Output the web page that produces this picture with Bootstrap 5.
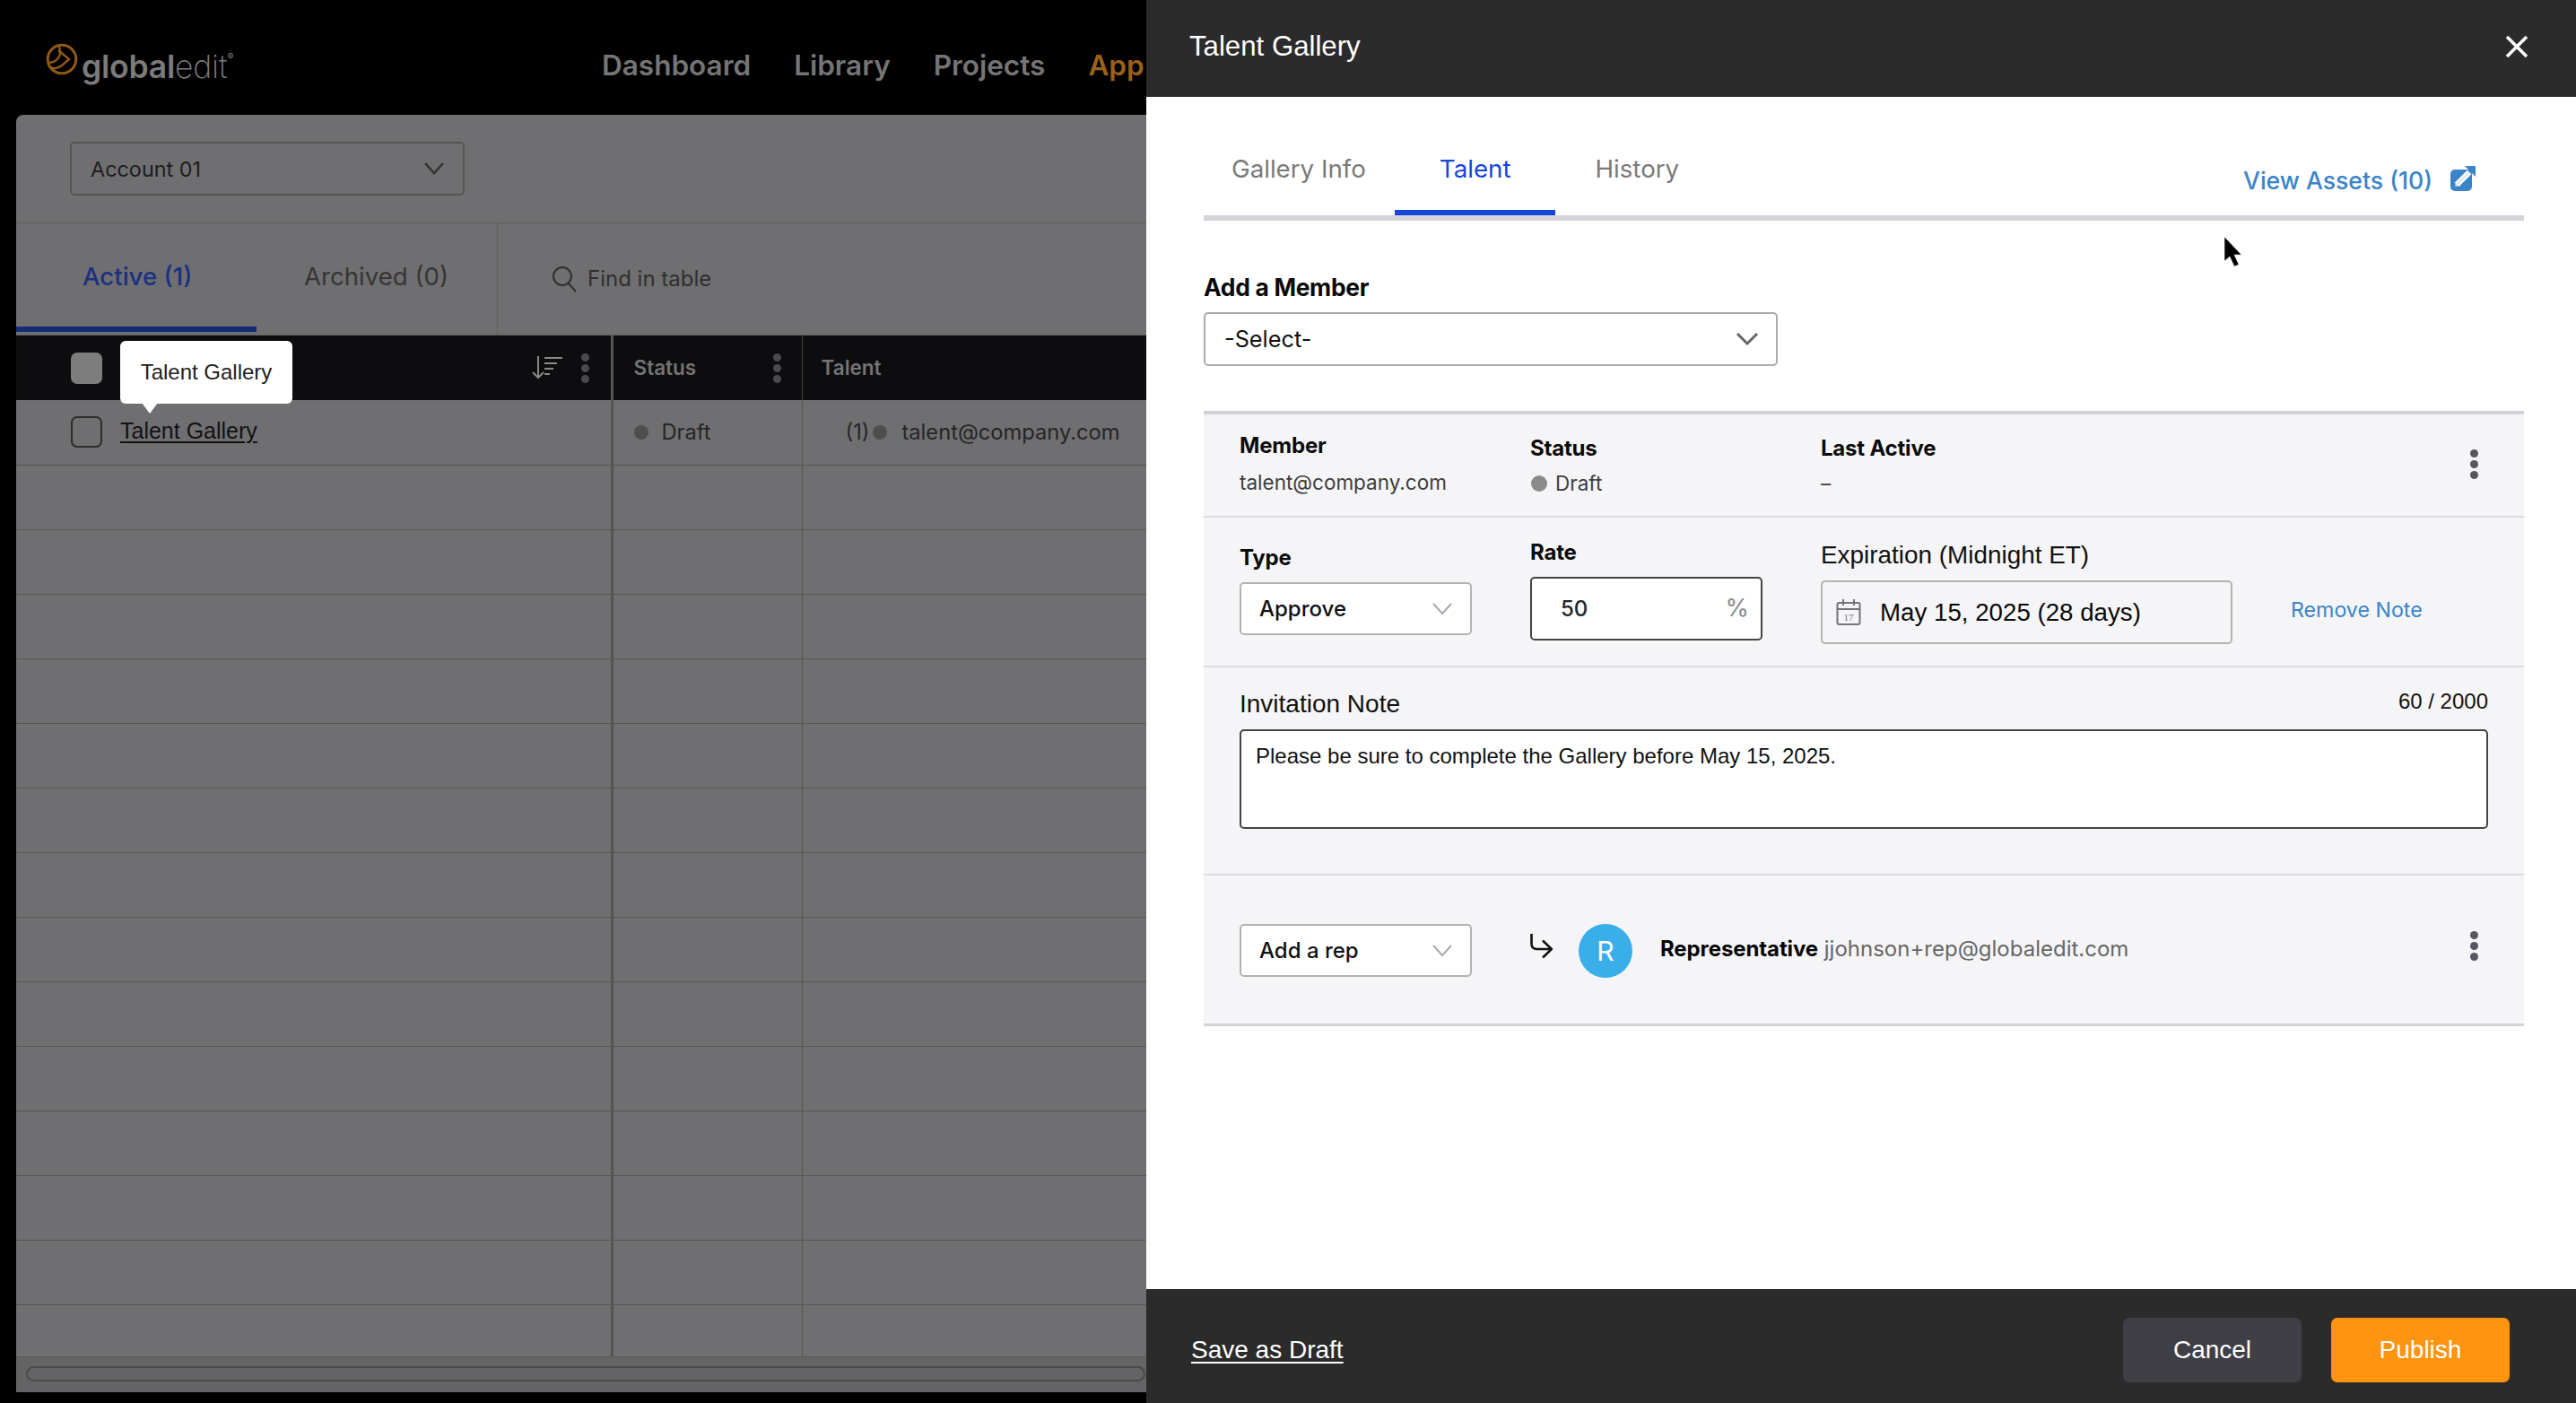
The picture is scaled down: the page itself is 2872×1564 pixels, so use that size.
<!DOCTYPE html>
<html lang="en">
<head>
<meta charset="utf-8">
<title>Talent Gallery</title>
<link rel="stylesheet" href="https://cdn.jsdelivr.net/npm/bootstrap@5.3.0/dist/css/bootstrap.min.css">
<style>
html,body{height:100%;margin:0;background:#000;overflow:hidden}
body{font-family:"Inter","Liberation Sans",sans-serif;color:#111}
.ari{font-family:"Liberation Sans",Arial,sans-serif}
.shell{width:2872px;height:1564px}
.leftpane{width:1278px;height:1564px;overflow:hidden;background:#000;flex:none;position:relative}
.topbar{height:128px;padding-left:51px}
.logoicon{flex:none;margin-top:4px}
.logoword{font-size:35.500px;line-height:1;color:#7b7b7b;margin-left:4px;margin-top:22px;letter-spacing:-.2px;font-family:"Inter",sans-serif;flex:none}
.logoword b{font-weight:600}
.logoword span{font-weight:200;color:#7d7d7d}
.logoword sup{font-size:11px;top:-1.8em;font-weight:400}
.mainlinks{margin-left:auto;gap:48px;margin-top:18px;white-space:nowrap;flex-wrap:nowrap;flex:none;width:607px}
.mainlinks a{font-size:31.5px;font-weight:600;color:#757575;text-decoration:none;padding:0;flex:none}
.mainlinks a.apx{color:#9c6119}
.graybox{margin-left:18px;width:1260px;height:1424px;background:#6f6f71;border-top-left-radius:8px;overflow:hidden}
.acctrow{height:121px;padding:30px 0 0 60px;border-bottom:1px solid #5b5b5b}
.acctsel{width:440px;height:60px;background-color:transparent;border:2px solid #555;border-radius:5px;font-size:23.4px;color:#1d1d1d;padding:2px 0 0 21px;box-shadow:none;background-position:right 17px center;background-size:30px 18px;font-family:"Inter",sans-serif;background-image:url("data:image/svg+xml,%3Csvg xmlns='http://www.w3.org/2000/svg' viewBox='0 0 30 18'%3E%3Cpath d='M5 3l10 11L25 3' fill='none' stroke='%23333' stroke-width='2.6'/%3E%3C/svg%3E")}
.tabrow{height:124px;position:relative}
.tabact,.tabarc{font-size:27.6px;text-decoration:none}
.tabact{width:268px;height:121px;line-height:118px;padding-left:74px;color:#1a3180;border-bottom:6px solid #142c75;font-weight:500}
.tabarc{width:269px;height:124px;line-height:118px;padding-left:53px;color:#353535;border-right:1px solid #606060}
.finder{padding-left:60px;gap:12px;font-size:24px;color:#2f2f2f;padding-top:0}
.gtwrap{height:1139px;overflow:hidden;border-top:1px solid #5f5f5f;position:relative}
.gtab{table-layout:fixed;width:1260px;border-collapse:collapse;--bs-table-bg:transparent;margin:0}
.gtab th,.gtab td{padding:0;vertical-align:middle;border-right:1px solid #555;height:72px}
.gtab td{border-bottom:1px solid #565656;color:#252525;font-size:23.7px;font-weight:400}
.gtab th{background:#0d0d0f;font-size:22.5px;font-weight:600;color:#747474;border-bottom:0;border-right-color:#444}
.gtab .c1{width:664px;border-right:3px solid #555}
.gtab .c2{width:212px}
.gtab .c3{border-right:0}
.c1in{padding-left:61px}
.c2in{padding-left:23px}
.c3in{padding-left:21px}
.hsort{margin-left:auto;margin-right:20px;flex:none}
.kb1{margin-right:24px}
.kb2{margin-left:auto;margin-right:23px}
.hcheck{width:35px;height:35px;background:#7d7d7d;border-radius:7px;flex:none}
.rcheck{width:35px;height:35px;border:2px solid #2c2c2c;border-radius:7px;flex:none;margin-right:20px}
.ttname{color:#111;font-size:25px;text-decoration:underline;text-underline-offset:3px;margin-top:-2px}
.gdot{width:16px;height:16px;border-radius:50%;background:#4e4e4e;flex:none}
.draftgap{gap:15px}
.tipbox{position:absolute;left:116px;top:6px;width:192px;height:70px;background:#fff;border-radius:6px;font-size:24px;color:#222;display:flex;align-items:center;justify-content:center;z-index:3}
.tipbox::after{content:"";position:absolute;left:24px;top:69px;border-left:9px solid transparent;border-right:9px solid transparent;border-top:12px solid #fff}
.hscroll{height:40px;background:#646466;padding:10px 1px 0 11px;border-top:1px solid #5a5a5a}
.hthumb{height:17px;border:2px solid #4a4a48;border-radius:9px}
.sidepanel{width:1594px;height:1564px;background:#fff;flex:none;position:relative}
.sidehead{height:108px;background:#2b2b2b;padding:0 53px 4px 48px;color:#fff;font-size:31.2px}
.closebtn{background:none;border:0;padding:0;line-height:0}
.sidebody{flex:1 1 auto;padding:0 58px 0 64px}
.tabline{height:138px;border-bottom:6px solid #d3d3da}
.tabline a{text-decoration:none;font-size:27.7px;color:#7a7a7a;font-weight:400;height:132px;padding-top:64px;display:block;line-height:32px}
.tba{padding-left:31px;padding-right:32px}
.tbb{padding-left:50px;padding-right:50px;color:#1546d8!important;border-bottom:6px solid #1546d8;font-weight:500}
.tbc{padding-left:44px}
.viewlink{color:#3a84c9!important;font-weight:500!important;font-size:26.6px!important;padding-top:77px!important;gap:20px;margin-right:54px;display:flex!important;align-items:flex-start}
.addlbl{font-size:26.4px;font-weight:700;color:#0a0a0a;margin:58px 0 12px;line-height:32px;letter-spacing:-.3px}
.pickmem{width:640px;height:60px;border:2px solid #aaa;border-radius:5px;font-size:25.3px;padding:0 0 0 21px;color:#111;box-shadow:none;font-family:"Inter",sans-serif;background-position:right 17px center;background-size:30px 18px;background-image:url("data:image/svg+xml,%3Csvg xmlns='http://www.w3.org/2000/svg' viewBox='0 0 30 18'%3E%3Cpath d='M4 3l11 11L26 3' fill='none' stroke='%23666' stroke-width='3'/%3E%3C/svg%3E")}
.memcard{margin-top:50px;background:#f5f5f7;border-top:4px solid #d2d2d8;border-bottom:3px solid #d2d2d8}
.mrow{padding-left:40px;border-bottom:2px solid #dcdce2}
.mrow:last-child{border-bottom:0}
.mc1{width:324px;flex:none}
.mc3{width:460px;flex:none}
.r1{height:115px}
.r2{height:167px}
.r3{height:232px}
.r4{height:165px;padding-top:54px}
.blab{font-size:24px;font-weight:700;color:#0b0b0b;line-height:28px;letter-spacing:-.2px}
.val{font-size:22.5px;color:#3d3d3d;line-height:28px}
.mp1{padding-top:21px}
.mp1 .blab{margin-bottom:13px}
.mp2{padding-top:24px}
.mp2 .blab{margin-bottom:11px}
.sdot{width:18px;height:18px;border-radius:50%;background:#8a8a8a;flex:none;margin-right:9px;margin-left:1px}
.kebab{width:9px;gap:3px;flex:none}
.kebab i{display:block;width:9px;height:9px;border-radius:50%;background:#55565f}
.gtab .kebab i{background:#4a4a4c}
.kpos1{position:absolute;left:1412px;top:39px}
.kpos2{position:absolute;left:1412px;top:62px}
.mini{width:259px;height:59px;border:2px solid #b3b3b3;border-radius:5px;font-size:24px;font-weight:500;padding:0 0 0 20px;color:#111;box-shadow:none;font-family:"Inter",sans-serif;background-position:right 19px center;background-size:24px 16px;background-image:url("data:image/svg+xml,%3Csvg xmlns='http://www.w3.org/2000/svg' viewBox='0 0 24 16'%3E%3Cpath d='M2 2l10 11L22 2' fill='none' stroke='%23a8a8b0' stroke-width='2'/%3E%3C/svg%3E")}
.typecol{padding-top:31px}
.typecol .blab{margin-bottom:13px}
.ratecol{padding-top:25px}
.ratecol .blab{margin-bottom:13px}
.expcol{padding-top:27px}
.rate{width:259px;height:71px;border:2px solid #444;border-radius:5px;background:#fff;padding:0 13px 0 32px}
.rate input{border:0;outline:0;padding:0;width:120px;font-size:24px;font-weight:500;box-shadow:none;background:transparent;border-radius:0}
.rate span{font-size:27px;color:#8a8a8f}
.datebox{width:459px;height:71px;border:2px solid #b3b3b3;border-radius:5px;background:#f5f5f7;padding-left:15px;gap:21px;font-size:27.7px;color:#0a0a0a}
.explab{font-size:27.9px;line-height:30px;margin-bottom:13px;color:#111}
.remlink{font-size:23.2px;color:#3a84c9;text-decoration:none;margin-left:64px;margin-top:88px;line-height:30px;white-space:nowrap}
.notehead{padding-top:24px;margin-right:40px;margin-bottom:11px}
.notelab{font-size:28px;color:#111;line-height:34px}
.notecount{font-size:24px;color:#111;line-height:28px}
.notearea{width:1392px;height:111px;border:2px solid #444;border-radius:5px;font-size:24px;padding:10px 16px;color:#111;resize:none;box-shadow:none}
.arrowic{margin:11px 29px 0 65px;flex:none}
.avat{width:60px;height:60px;border-radius:50%;background:#3aaee8;color:#fff;font-size:30px;flex:none}
.rep{font-size:24px;color:#666;margin-left:31px;margin-top:10px;white-space:nowrap}
.rep b{color:#070707;font-weight:700;letter-spacing:-.1px}
.sidefoot{height:127px;background:#2b2b2b;padding:9px 74px 0 50px}
.draftlink{color:#fff;font-size:28px;text-decoration:underline;text-underline-offset:4px}
.foogap{gap:33px}
.foobtn{width:199px;height:72px;border:0;border-radius:7px;color:#fff;font-size:28px;padding:0}
.fgray{background:#3f3f45}
.forng{background:#ff9410}
.fgray:hover{background:#3f3f45;color:#fff}
.forng:hover{background:#ff9410;color:#fff}
.ptr{position:absolute;left:1202px;top:264px;z-index:5;line-height:0}
</style>
</head>
<body>
<div class="shell d-flex">
  <div class="leftpane">
    <div class="topbar d-flex align-items-center">
      <svg class="logoicon" width="36" height="36" viewBox="0 0 36 36" fill="none" stroke="#8f5a16" stroke-width="3"><circle cx="18" cy="18" r="15.8"/><path d="M2.500 22c5 0 9-2 12-6 2.500-3 2-7 0-14M14 8l12 10-8 7c-4 3-9 4-12 2" stroke-width="2.400"/></svg>
      <div class="logoword"><b>global</b><span>edit</span><sup>®</sup></div>
      <nav class="nav mainlinks"><a class="nav-link" href="#">Dashboard</a><a class="nav-link" href="#">Library</a><a class="nav-link" href="#">Projects</a><a class="nav-link apx" href="#">App</a></nav>
    </div>
    <div class="graybox">
      <div class="acctrow">
        <select class="form-select acctsel"><option>Account 01</option></select>
      </div>
      <div class="tabrow d-flex">
        <a href="#" class="tabact d-block">Active (1)</a>
        <a href="#" class="tabarc d-block">Archived (0)</a>
        <div class="finder d-flex align-items-center">
          <svg width="28" height="30" viewBox="0 0 28 30" fill="none" stroke="#2f2f2f" stroke-width="2"><circle cx="12" cy="12" r="10"/><path d="M19 20l8 9"/></svg>
          <span>Find in table</span>
        </div>
      </div>
      <div class="gtwrap">
        <div class="tipbox ari">Talent Gallery</div>
        <table class="table gtab">
          <thead>
            <tr>
              <th class="c1"><div class="d-flex align-items-center c1in">
                <div class="hcheck"></div>
                <svg class="hsort" width="36" height="28" viewBox="0 0 36 28" fill="none" stroke="#8a8a8a" stroke-width="2"><path d="M8 1v24M2 19l6 6 6-6"/><path d="M15 3h20M15 9h14M15 15h10M15 21h6"/></svg>
                <div class="kebab kb1 d-flex flex-column"><i></i><i></i><i></i></div>
              </div></th>
              <th class="c2"><div class="d-flex align-items-center c2in"><span>Status</span><div class="kebab kb2 d-flex flex-column"><i></i><i></i><i></i></div></div></th>
              <th class="c3"><div class="c3in">Talent</div></th>
            </tr>
          </thead>
          <tbody>
            <tr>
              <td class="c1"><div class="d-flex align-items-center c1in"><div class="rcheck"></div><a href="#" class="ttname ari">Talent Gallery</a></div></td>
              <td class="c2"><div class="d-flex align-items-center draftgap c2in"><span class="gdot"></span><span>Draft</span></div></td>
              <td class="c3"><div class="d-flex align-items-center"><span class="ms-5">(1)</span><span class="gdot ms-1"></span><span class="ms-3 text-nowrap">talent@company.com</span></div></td>
            </tr>
            <tr><td class="c1"></td><td class="c2"></td><td class="c3"></td></tr>
            <tr><td class="c1"></td><td class="c2"></td><td class="c3"></td></tr>
            <tr><td class="c1"></td><td class="c2"></td><td class="c3"></td></tr>
            <tr><td class="c1"></td><td class="c2"></td><td class="c3"></td></tr>
            <tr><td class="c1"></td><td class="c2"></td><td class="c3"></td></tr>
            <tr><td class="c1"></td><td class="c2"></td><td class="c3"></td></tr>
            <tr><td class="c1"></td><td class="c2"></td><td class="c3"></td></tr>
            <tr><td class="c1"></td><td class="c2"></td><td class="c3"></td></tr>
            <tr><td class="c1"></td><td class="c2"></td><td class="c3"></td></tr>
            <tr><td class="c1"></td><td class="c2"></td><td class="c3"></td></tr>
            <tr><td class="c1"></td><td class="c2"></td><td class="c3"></td></tr>
            <tr><td class="c1"></td><td class="c2"></td><td class="c3"></td></tr>
            <tr><td class="c1"></td><td class="c2"></td><td class="c3"></td></tr>
            <tr><td class="c1"></td><td class="c2"></td><td class="c3"></td></tr>
          </tbody>
        </table>
      </div>
      <div class="hscroll"><div class="hthumb"></div></div>
    </div>
  </div>

  <div class="sidepanel d-flex flex-column">
    <div class="sidehead d-flex align-items-center justify-content-between ari">
      <span>Talent Gallery</span>
      <button class="closebtn" type="button" aria-label="Close"><svg width="26" height="26" viewBox="0 0 26 26" fill="none" stroke="#fff" stroke-width="3.600"><path d="M2 2l22 22M24 2L2 24"/></svg></button>
    </div>
    <div class="sidebody">
      <nav class="tabline d-flex">
        <a href="#" class="tba">Gallery Info</a>
        <a href="#" class="tbb">Talent</a>
        <a href="#" class="tbc">History</a>
        <a href="#" class="viewlink ms-auto"><span>View Assets (10)</span>
          <svg width="28" height="28" viewBox="0 0 28 28" class="flex-none"><rect y="4" width="24" height="24" rx="5" fill="#3a84c9"/><path d="M7 21L21 7" stroke="#fff" stroke-width="6.500"/><path d="M6.500 21.500L19 9" stroke="#dfeaf5" stroke-width="2.600" stroke-linecap="round"/><path d="M16 0h12v12z" fill="#3a84c9"/></svg>
        </a>
      </nav>
      <div class="addlbl">Add a Member</div>
      <select class="form-select pickmem"><option>-Select-</option></select>

      <div class="memcard position-relative">
        <div class="mrow r1 d-flex position-relative">
          <div class="mc1 mp1"><div class="blab">Member</div><div class="val">talent@company.com</div></div>
          <div class="mc1 mp2"><div class="blab">Status</div><div class="val d-flex align-items-center"><span class="sdot"></span>Draft</div></div>
          <div class="mc1 mp2"><div class="blab">Last Active</div><div class="val">–</div></div>
          <div class="kebab kpos1 d-flex flex-column"><i></i><i></i><i></i></div>
        </div>
        <div class="mrow r2 d-flex">
          <div class="mc1 typecol"><div class="blab">Type</div><select class="form-select mini"><option>Approve</option></select></div>
          <div class="mc1 ratecol"><div class="blab">Rate</div>
            <div class="rate d-flex align-items-center justify-content-between"><input class="form-control" value="50" aria-label="Rate"><span>%</span></div></div>
          <div class="mc3 expcol"><div class="ari explab">Expiration (Midnight ET)</div>
            <div class="datebox ari d-flex align-items-center">
              <svg width="28" height="30" viewBox="0 0 28 30" fill="none" stroke="#73737b" stroke-width="2"><rect x="1.500" y="4" width="25" height="24" rx="2"/><path d="M1.500 11h25M8 0v7M20 0v7"/><text x="14" y="24" text-anchor="middle" font-size="11" fill="#73737b" stroke="none" font-family="Liberation Serif,serif">17</text></svg>
              <span>May 15, 2025 (28 days)</span>
            </div></div>
          <a href="#" class="remlink">Remove Note</a>
        </div>
        <div class="mrow r3">
          <div class="d-flex justify-content-between align-items-start notehead">
            <div class="notelab ari">Invitation Note</div><div class="notecount ari">60 / 2000</div>
          </div>
          <textarea class="form-control notearea ari" rows="2" aria-label="Invitation Note">Please be sure to complete the Gallery before May 15, 2025.</textarea>
        </div>
        <div class="mrow r4 d-flex align-items-start position-relative">
          <select class="form-select mini flex-none"><option>Add a rep</option></select>
          <svg class="arrowic" width="25" height="28" viewBox="0 0 25 28" fill="none" stroke="#111" stroke-width="2.600"><path d="M1.500 0v11q0 6 6 6H24M14 7.500l10 9.500-10 9.500"/></svg>
          <div class="avat d-flex align-items-center justify-content-center">R</div>
          <div class="rep"><b>Representative</b> jjohnson+rep@globaledit.com</div>
          <div class="kebab kpos2 d-flex flex-column"><i></i><i></i><i></i></div>
        </div>
      </div>
    </div>
    <div class="sidefoot d-flex align-items-center ari">
      <a href="#" class="draftlink">Save as Draft</a>
      <div class="ms-auto d-flex foogap">
        <button type="button" class="btn foobtn fgray ari">Cancel</button>
        <button type="button" class="btn foobtn forng ari">Publish</button>
      </div>
    </div>
    <div class="ptr"><svg width="20" height="34" viewBox="0 0 20 34"><path d="M0 0v27l6-5 5 11 5-2-5-11h8z" fill="#000" stroke="#ddd" stroke-width=".6"/></svg></div>
  </div>
</div>
<script src="https://cdn.jsdelivr.net/npm/bootstrap@5.3.0/dist/js/bootstrap.bundle.min.js"></script>
</body>
</html>
